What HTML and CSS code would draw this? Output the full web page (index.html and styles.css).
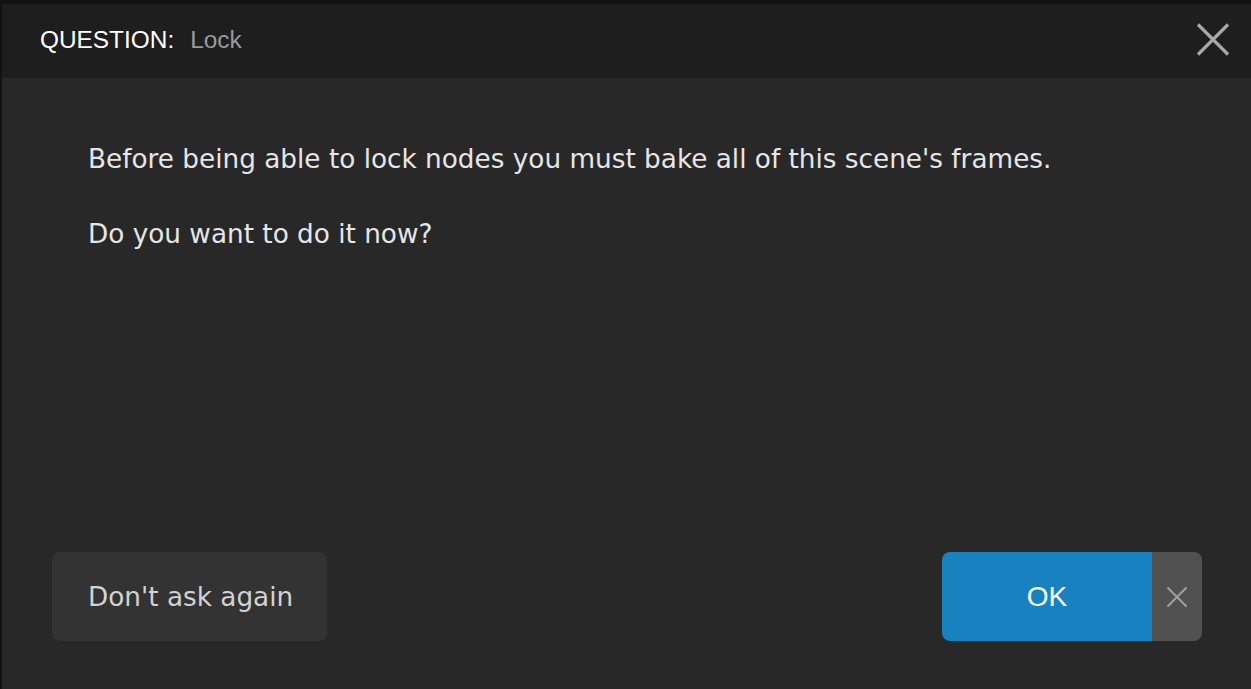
FILE: index.html
```html
<!DOCTYPE html>
<html>
<head>
<meta charset="utf-8">
<link rel="stylesheet" href="styles.css">
</head>
<body>
<div class="dialog">
  <div class="header">
    <div class="title"><span class="kind">QUESTION:</span><span class="name">Lock</span></div>
    <button class="close" aria-label="Close">
      <svg width="34" height="33" viewBox="0 0 34 33"><path d="M2 1.5 L32 31.5 M32 1.5 L2 31.5" stroke="#a8a8a8" stroke-width="3.2" fill="none"/></svg>
    </button>
  </div>
  <div class="content">
    <div class="message">
      <p>Before being able to lock nodes you must bake all of this scene's frames.</p>
      <p>Do you want to do it now?</p>
    </div>
    <div class="actions">
      <button class="btn secondary">Don't ask again</button>
      <div class="split">
        <button class="btn primary">OK</button>
        <button class="btn cancel" aria-label="Cancel">
          <svg width="22" height="22" viewBox="0 0 22 22"><path d="M1.5 1.5 L20.5 20.5 M20.5 1.5 L1.5 20.5" stroke="#a0a0a0" stroke-width="2" fill="none"/></svg>
        </button>
      </div>
    </div>
  </div>
</div>
</body>
</html>
```
FILE: styles.css
```css
html, body {
  margin: 0;
  padding: 0;
  height: 100%;
  background: #121212;
  overflow: hidden;
}
.dialog {
  box-sizing: border-box;
  height: calc(100% - 4px);
  margin-top: 4px;
  margin-left: 2px;
  display: flex;
  flex-direction: column;
  background: #282828;
}
.header {
  height: 74px;
  flex: none;
  background: #1e1e1e;
  display: flex;
  align-items: center;
  justify-content: space-between;
  padding: 0 21px 0 38px;
}
.title {
  font-family: "Liberation Sans", Arial, sans-serif;
  font-size: 24.4px;
  margin-top: -2px;
}
.kind { color: #ffffff; }
.name { color: #9a9a9a; margin-left: 16px; }
.close {
  background: none;
  border: 0;
  padding: 0;
  margin-top: -4px;
  display: flex;
  cursor: pointer;
}
.content {
  flex: 1;
  display: flex;
  flex-direction: column;
  justify-content: space-between;
  padding: 0 49px 48px 50px;
}
.message {
  padding: 63px 0 0 36px;
  font-family: "DejaVu Sans", Tahoma, sans-serif;
  font-size: 26.3px;
  color: #e6e6e6;
}
.message p {
  margin: 0 0 39px 0;
  line-height: 36px;
}
.actions {
  display: flex;
  justify-content: space-between;
  align-items: stretch;
}
.btn {
  border: 0;
  font-family: "DejaVu Sans", Tahoma, sans-serif;
  font-size: 26.3px;
  height: 89px;
  cursor: pointer;
}
.secondary {
  width: 275px;
  background: #333333;
  color: #d2d2d2;
  border-radius: 8px;
  text-align: left;
  padding: 0 0 0 36px;
}
.split {
  display: flex;
  border-radius: 8px;
  overflow: hidden;
}
.primary {
  width: 210px;
  background: #1882c0;
  color: #ffffff;
  font-family: "Liberation Sans", Arial, sans-serif;
  font-size: 28px;
  padding: 0;
}
.cancel {
  width: 50px;
  background: #515151;
  display: flex;
  align-items: center;
  justify-content: center;
  padding: 0;
}
```
